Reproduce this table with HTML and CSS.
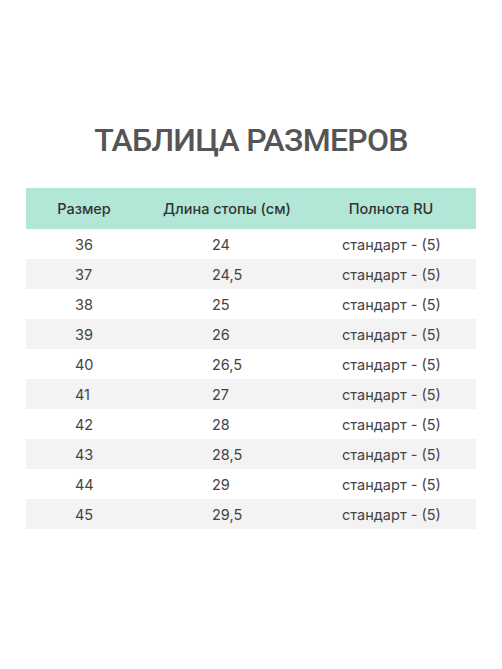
FILE: index.html
```html
<!DOCTYPE html>
<html lang="ru">
<head>
<meta charset="utf-8">
<link rel="stylesheet" href="styles.css">
</head>
<body>
<div class="page">
  <h1 class="title">ТАБЛИЦА РАЗМЕРОВ</h1>
  <div class="table">
    <div class="row head">
      <div class="cell c1">Размер</div>
      <div class="cell c2">Длина стопы (см)</div>
      <div class="cell c3">Полнота RU</div>
    </div>
    <div class="row"><div class="cell c1">36</div><div class="cell c2">24</div><div class="cell c3">стандарт - (5)</div></div>
    <div class="row alt"><div class="cell c1">37</div><div class="cell c2">24,5</div><div class="cell c3">стандарт - (5)</div></div>
    <div class="row"><div class="cell c1">38</div><div class="cell c2">25</div><div class="cell c3">стандарт - (5)</div></div>
    <div class="row alt"><div class="cell c1">39</div><div class="cell c2">26</div><div class="cell c3">стандарт - (5)</div></div>
    <div class="row"><div class="cell c1">40</div><div class="cell c2">26,5</div><div class="cell c3">стандарт - (5)</div></div>
    <div class="row alt"><div class="cell c1">41</div><div class="cell c2">27</div><div class="cell c3">стандарт - (5)</div></div>
    <div class="row"><div class="cell c1">42</div><div class="cell c2">28</div><div class="cell c3">стандарт - (5)</div></div>
    <div class="row alt"><div class="cell c1">43</div><div class="cell c2">28,5</div><div class="cell c3">стандарт - (5)</div></div>
    <div class="row"><div class="cell c1">44</div><div class="cell c2">29</div><div class="cell c3">стандарт - (5)</div></div>
    <div class="row alt"><div class="cell c1">45</div><div class="cell c2">29,5</div><div class="cell c3">стандарт - (5)</div></div>
  </div>
</div>
</body>
</html>
```
FILE: styles.css
```css
html, body {
  margin: 0;
  padding: 0;
  background: #ffffff;
}
.page {
  width: 502px;
  height: 669px;
  font-family: Inter, "Noto Sans", sans-serif;
  color: #444444;
  padding-top: 120px;
  box-sizing: border-box;
}
.title {
  margin: 0;
  text-align: center;
  font-family: Roboto, Inter, sans-serif;
  font-size: 32px;
  line-height: 40px;
  font-weight: 500;
  letter-spacing: -0.75px;
  color: #555555;
}
.table {
  margin: 28px 0 0 26px;
  width: 450px;
}
.row {
  display: grid;
  grid-template-columns: 116px 170px 164px;
  height: 30px;
  align-items: center;
  font-size: 14.5px;
  color: #444444;
}
.row.alt {
  background: #f3f3f3;
}
.row.head {
  height: 41px;
  background: #b2e6d7;
  font-weight: 500;
  color: #333333;
  font-size: 14.5px;
}
.head .cell {
  text-align: center;
  padding: 0;
}
.head .c3 {
  padding-right: 6px;
}
.c1 { padding-left: 49px; }
.c2 { padding-left: 70px; }
.c3 { padding-left: 30px; }
```
